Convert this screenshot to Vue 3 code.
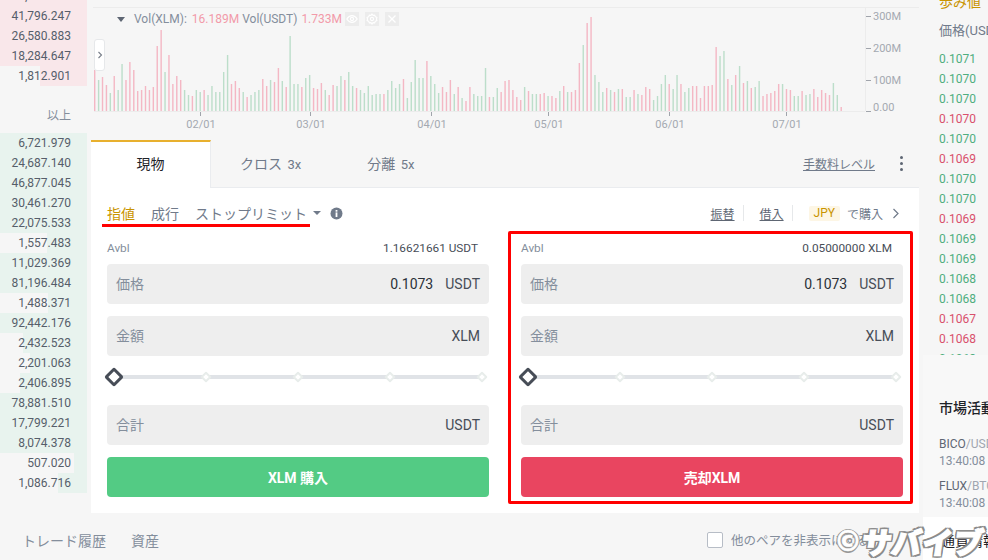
<script setup>
const asks = [
  { v: '9,204.318', w: 87 }, { v: '41,796.247', w: 87 }, { v: '26,580.883', w: 87 },
  { v: '18,284.647', w: 87 }, { v: '1,812.901', w: 47 }
]
const bids = [
  ['6,721.979', 87], ['24,687.140', 87], ['46,877.045', 87], ['30,461.270', 87], ['22,075.533', 87],
  ['1,557.483', 40], ['11,029.369', 87], ['81,196.484', 87], ['1,488.371', 39], ['92,442.176', 87],
  ['2,432.523', 64], ['2,201.063', 57], ['2,406.895', 67], ['78,881.510', 87], ['17,799.221', 87],
  ['8,074.378', 87], ['507.020', 13], ['1,086.716', 29]
]
// p = pink, g = green; heights measured from the reference
const raw = 'p41 g31 p34 p26 g18 p35 g21 g47 p31 p49 p41 p20 p21 p25 p21 p24 p65 p81 g39 p56 p27 p35 p31 g21 g16 p15 g21 g19 p21 g16 g25 g19 g19 g39 g56 p27 p30 p23 g19 p14 g16 g19 g21 p32 p25 g31 p29 p43 g30 p24 g75 g27 g27 p24 g33 g36 p23 p22 p28 g21 p16 p26 g25 g35 p31 g39 g25 p23 g21 g18 g25 g16 g17 g17 p17 g21 g30 g23 g27 p32 g13 g29 g51 g33 g33 p50 g35 g27 g18 p24 p19 p31 g17 p24 g13 p10 p24 g17 g15 g15 g43 p14 g14 g23 p19 p30 p31 p21 p14 p11 g24 p20 g17 g17 p17 p18 g15 p15 p13 g20 p25 g19 p19 p21 p48 g66 p88 p94 g36 g29 g19 p23 g21 p19 g22 p22 g14 g14 p21 g17 p16 p24 p22 g11 g15 g27 g36 p27 g22 g36 p27 g19 g23 p25 p25 p13 p25 p25 p26 p64 g55 g60 p32 g26 p36 g45 p28 g30 p23 g24 g30 p15 p17 p18 p20 p27 g27 p22 p21 g15 g15 p20 g16 g17 p22 p14 p21 p18 p16 g28 g16 p4'
const tokens = raw.split(' ')
const step = (841 - 94.5) / (tokens.length - 1)
const bars = tokens.map((t, i) => {
  const h = Number(t.slice(1))
  return { x: 94 + i * step, y: 111 - h, h, pink: t[0] === 'p' }
})
const xTicks = [
  { x: 200, t: '02/01' }, { x: 310, t: '03/01' }, { x: 431, t: '04/01' },
  { x: 548, t: '05/01' }, { x: 669, t: '06/01' }, { x: 786, t: '07/01' }
]
const yTicks = [
  { y: 16, t: '300M' }, { y: 48, t: '200M' }, { y: 80, t: '100M' }, { y: 111, t: '0.00', ty: 107 }
]
const forms = [
  { id: 'buy', avbl: '1.16621661 USDT', btn: 'XLM 購入' },
  { id: 'sell', avbl: '0.05000000 XLM', btn: '売却XLM' }
]
const trades = [
  ['0.1071', 'g'], ['0.1070', 'g'], ['0.1070', 'g'], ['0.1070', 'r'], ['0.1070', 'g'],
  ['0.1069', 'r'], ['0.1070', 'g'], ['0.1070', 'g'], ['0.1069', 'r'], ['0.1069', 'g'],
  ['0.1069', 'g'], ['0.1068', 'g'], ['0.1068', 'g'], ['0.1067', 'r'], ['0.1068', 'r'], ['0.1068', 'g']
]
</script>

<template>
  <div class="page">
    <div class="main">
      <div class="top">
        <aside class="book">
          <div v-for="r in asks" :key="r.v" class="row">
            <i class="depth ask" :style="{ width: r.w + 'px' }"></i>
            <span>{{ r.v }}</span>
          </div>
          <div class="limit">以上</div>
          <div v-for="r in bids" :key="r[0]" class="row">
            <i class="depth bid" :style="{ width: r[1] + 'px' }"></i>
            <span>{{ r[0] }}</span>
          </div>
        </aside>

        <section class="center">
          <div class="chart">
            <svg class="chart-svg" width="828" height="140" viewBox="91 0 828 140">
              <line x1="93" y1="7.5" x2="919" y2="7.5" stroke="#ececec" />
              <line x1="865.5" y1="7" x2="865.5" y2="111" stroke="#ececec" />
              <line x1="94" y1="111.5" x2="865" y2="111.5" stroke="#ececec" />
              <rect
                v-for="(b, i) in bars" :key="i" :x="b.x" :y="b.y" width="1.4" :height="b.h"
                :fill="b.pink ? '#f3849a' : '#8ccaa6'" fill-opacity="0.55"
              />
              <g v-for="t in xTicks" :key="t.t">
                <line :x1="t.x + 0.5" y1="112" :x2="t.x + 0.5" y2="116" stroke="#a0a4ab" />
                <text class="axis" :x="t.x + 1" y="128" text-anchor="middle">{{ t.t }}</text>
              </g>
              <g v-for="t in yTicks" :key="t.t">
                <line x1="866" :y1="t.y + 0.5" x2="871" :y2="t.y + 0.5" stroke="#a0a4ab" />
                <text class="axis" x="873" :y="(t.ty || t.y) + 4">{{ t.t }}</text>
              </g>
            </svg>
            <div class="legend">
              <i class="caret"></i>
              <span class="lg">Vol(XLM):</span>
              <span class="lp">16.189M</span>
              <span class="lg">Vol(USDT)</span>
              <span class="lp">1.733M</span>
              <span class="lbtns">
                <b class="lbtn">
                  <svg width="12" height="12" viewBox="0 0 12 12" fill="none" stroke="#fff" stroke-width="1.1"><path d="M.8 6C2.3 3.6 4 2.6 6 2.6S9.7 3.6 11.2 6C9.7 8.4 8 9.4 6 9.4S2.3 8.4.8 6z" /><circle cx="6" cy="6" r="1.6" /></svg>
                </b>
                <b class="lbtn">
                  <svg width="12" height="12" viewBox="0 0 12 12" fill="none" stroke="#fff" stroke-width="1.1"><path d="M6 1l1 1.4 1.7-.3.6 1.6 1.6.7-.4 1.6.4 1.6-1.6.7-.6 1.6L7 9.6 6 11 5 9.6l-1.7.3-.6-1.6L1.1 7.6 1.5 6l-.4-1.6 1.6-.7.6-1.6L5 2.4z" /><circle cx="6" cy="6" r="1.6" /></svg>
                </b>
                <b class="lbtn">
                  <svg width="12" height="12" viewBox="0 0 12 12" fill="none" stroke="#fff" stroke-width="1.3"><path d="M2.5 2.5l7 7M9.5 2.5l-7 7" /></svg>
                </b>
              </span>
            </div>
            <div class="toggle">
              <svg width="6" height="8" viewBox="0 0 6 8" fill="none" stroke="#777e88" stroke-width="1.1"><path d="M1.5 1l3 3-3 3" /></svg>
            </div>
          </div>

          <div class="tabs">
            <div class="tab active">現物</div>
            <div class="tab t2">クロス <small>3x</small></div>
            <div class="tab t3">分離 <small>5x</small></div>
            <a class="fee">手数料レベル</a>
            <span class="dots"><i></i><i></i><i></i></span>
          </div>

          <div class="panel">
            <div class="types">
              <span class="type on">指値</span>
              <span class="type">成行</span>
              <span class="type">ストップリミット</span>
              <i class="caret small"></i>
              <svg class="info" width="13" height="13" viewBox="0 0 13 13"><circle cx="6.5" cy="6.5" r="6" fill="#707a8a" /><rect x="5.6" y="5.4" width="1.8" height="4.6" fill="#fff" /><rect x="5.6" y="3" width="1.8" height="1.7" fill="#fff" /></svg>
              <span class="actions">
                <a class="ul">振替</a>
                <i class="sep"></i>
                <a class="ul">借入</a>
                <i class="sep"></i>
                <b class="jpy">JPY</b>
                <span class="buyin">で購入</span>
                <svg class="chev" width="8" height="11" viewBox="0 0 8 11" fill="none" stroke="#707a8a" stroke-width="1.2"><path d="M1.5 1l4.5 4.5L1.5 10" /></svg>
              </span>
            </div>

            <div class="forms">
              <form v-for="f in forms" :key="f.id" class="form" @submit.prevent>
                <div class="avbl"><span class="al">Avbl</span><span class="av">{{ f.avbl }}</span></div>
                <div class="field"><span class="fl">価格</span><span class="fv">0.1073</span><span class="fu">USDT</span></div>
                <div class="field"><span class="fl">金額</span><span class="fu">XLM</span></div>
                <div class="slider">
                  <i class="track"></i>
                  <i class="knob big"></i>
                  <i class="knob"></i><i class="knob"></i><i class="knob"></i><i class="knob"></i>
                </div>
                <div class="field"><span class="fl">合計</span><span class="fu">USDT</span></div>
                <button class="btn" :class="f.id">{{ f.btn }}</button>
              </form>
            </div>
          </div>
        </section>
      </div>

      <div class="bottom">
        <span class="bt">トレード履歴</span>
        <span class="bt">資産</span>
        <label class="hide"><i class="check"></i>他のペアを非表示にする</label>
      </div>
    </div>

    <aside class="side">
      <div class="side-top">
        <div class="walk">歩み値</div>
        <div class="ph">価格(USDT)</div>
        <div class="trades">
          <div v-for="(t, i) in trades" :key="i" class="trade" :class="t[1]">{{ t[0] }}</div>
        </div>
      </div>
      <div class="activity">
        <div class="h">市場活動</div>
        <div class="act"><div class="sym">BICO<em>/USDT</em></div><div class="tm">13:40:08</div></div>
        <div class="act"><div class="sym">FLUX<em>/BTC</em></div><div class="tm">13:40:08</div></div>
      </div>
      <div class="coin">通貨情報</div>
    </aside>

    <!-- annotations lying over the screenshot -->
    <div class="mark-line"></div>
    <div class="mark-box"></div>
    <div class="wm"><span class="wmc">©</span><span class="wmt">サバイブ</span></div>
  </div>
</template>

<style>
html, body { margin: 0; background: #f6f6f6; }
</style>

<style scoped>
* { box-sizing: border-box; }
.page {
  position: relative;
  width: 988px;
  height: 560px;
  overflow: hidden;
  display: flex;
  background: #f6f6f6;
  font-family: Roboto, "Noto Sans CJK JP", sans-serif;
  color: #474d57;
}
.main { width: 923px; display: flex; flex-direction: column; }
.top { height: 513px; display: flex; gap: 4px; overflow: hidden; }
.book { width: 87px; flex: none; margin-top: -14px; }
.row {
  position: relative;
  height: 20px;
  line-height: 20px;
  font-size: 12px;
  text-align: right;
  padding-right: 16px;
  color: #565e6a;
}
.row span { position: relative; }
.depth { position: absolute; right: 0; top: 0; bottom: 0; }
.ask { background: #f9e7ea; }
.bid { background: #e8f3ee; }
.limit {
  height: 47px;
  padding: 20px 16px 0 0;
  text-align: right;
  font-size: 12px;
  line-height: 20px;
  color: #848e9c;
}
.center { width: 828px; flex: none; display: flex; flex-direction: column; }
.chart { position: relative; height: 140px; }
.chart-svg { display: block; }
.axis { font: 11px Roboto, sans-serif; fill: #a4a9b1; }
.legend {
  position: absolute;
  left: 26px;
  top: 12px;
  display: flex;
  align-items: center;
  height: 14px;
  font-size: 12px;
}
.caret {
  width: 0; height: 0;
  border: 4px solid transparent;
  border-top: 5px solid #5e6673;
  border-bottom: 0;
  margin-right: 9px;
}
.lg { color: #848e9c; margin-right: 5px; }
.lg + .lp + .lg { margin-right: 4px; }
.lp { color: #f29aa9; margin-right: 3px; }
.lbtns { display: flex; gap: 6px; }
.lbtn {
  width: 14px; height: 14px;
  background: #ececec;
  display: flex; align-items: center; justify-content: center;
}
.toggle {
  position: absolute;
  left: 3px;
  top: 39px;
  width: 11px;
  height: 32px;
  background: #fff;
  border: 1px solid #e6e8ea;
  border-radius: 3px;
  display: flex; align-items: center; justify-content: center;
}
.tabs {
  height: 48px;
  display: flex;
  align-items: center;
  border-bottom: 1px solid #eaecef;
  position: relative;
}
.tab { font-size: 14px; color: #707a8a; height: 48px; line-height: 48px; }
.tab small { font-size: 13px; margin-left: 2px; }
.tab.active {
  width: 120px;
  text-align: center;
  background: #fff;
  color: #1e2329;
  border-top: 2px solid #e8b02e;
  border-right: 1px solid #eaecef;
  line-height: 44px;
  margin-bottom: -1px;
}
.t2 { margin-left: 29px; }
.t3 { margin-left: 66px; }
.fee {
  margin-left: auto;
  font-size: 12px;
  color: #707a8a;
  text-decoration: underline;
}
.dots {
  display: flex; flex-direction: column; gap: 3px;
  margin: 0 16px 0 25px;
}
.dots i { width: 3px; height: 3px; border-radius: 50%; background: #5e6673; }
.panel { flex: 1; background: #fff; padding: 0 16px; }
.types {
  height: 52px;
  padding-bottom: 2px;
  display: flex;
  align-items: center;
  font-size: 14px;
}
.type { color: #707a8a; margin-right: 16px; }
.type.on { color: #c99400; }
.caret.small { margin: 0 9px 0 -10px; border-width: 4px; border-top-width: 4px; border-bottom-width: 0; border-top-color: #707a8a; }
.info { margin-left: 0; }
.actions { margin-left: auto; margin-right: 3px; display: flex; align-items: center; font-size: 12px; color: #707a8a; }
.ul { text-decoration: underline; color: #5e6673; }
.sep { width: 1px; height: 16px; background: #e6e8ea; margin: 0 16px 0 8px; }
.jpy {
  font-weight: 400;
  font-size: 12px;
  background: #fdf6e5;
  color: #c99400;
  padding: 0 5px;
  border-radius: 2px;
  height: 15px; line-height: 15px;
  margin-right: 7px;
}
.chev { margin-left: 9px; }
.forms { display: flex; gap: 32px; }
.form { width: 382px; display: flex; flex-direction: column; }
.avbl {
  height: 24px;
  padding: 0 11px 8px 0;
  display: flex;
  justify-content: space-between;
  align-items: center;
  font-size: 11.8px;
}
.al { color: #848e9c; }
.av { color: #474d57; }
.field {
  height: 40px;
  background: #eeeeee;
  border-radius: 4px;
  padding: 0 9px;
  display: flex;
  align-items: center;
  font-size: 14px;
}
.field + .field { margin-top: 12px; }
.fl { color: #848e9c; margin-right: auto; padding-bottom: 2px; }
.fv { color: #2b3139; margin-right: 12px; }
.fu { color: #474d57; }
.slider {
  position: relative;
  height: 49px;
  padding-bottom: 7px;
  display: flex;
  justify-content: space-between;
  align-items: center;
}
.track {
  position: absolute;
  left: 14px; right: 7px; top: 19px;
  height: 4px;
  background: #e0e3e7;
}
.knob {
  position: relative;
  width: 8px; height: 8px;
  margin: 0 3px;
  transform: rotate(45deg);
  background: #fff;
  border: 2px solid #e8edeb;
  border-radius: 1px;
}
.knob.big {
  width: 14px; height: 14px;
  margin: 0;
  border: 3px solid #474d57;
  border-radius: 2px;
}
.btn {
  height: 40px;
  margin-top: 12px;
  border: 0;
  border-radius: 4px;
  color: #fff;
  font: 700 14px Roboto, "Noto Sans CJK JP", sans-serif;
}
.btn.buy { background: #53cb84; }
.btn.sell { background: #e94560; }
.bottom {
  flex: 1;
  display: flex;
  align-items: center;
  padding: 6px 0 0 22px;
  font-size: 14px;
  color: #848e9c;
}
.bt { margin-right: 25px; }
.hide { margin-left: 523px; display: flex; align-items: center; font-size: 12.5px; white-space: nowrap; gap: 8px; }
.check { width: 16px; height: 16px; border: 1px solid #b7bdc6; border-radius: 2px; background: #fff; flex: none; }
.side { flex: 1; min-width: 0; display: flex; flex-direction: column; overflow: hidden; white-space: nowrap; }
.side-top { height: 355px; padding-left: 16px; overflow: hidden; }
.walk { font-size: 14px; line-height: 20px; margin-top: -8px; color: #c99400; }
.ph { font-size: 13px; line-height: 20px; margin-top: 9px; color: #707a8a; }
.trades { margin-top: 8px; }
.trade { font-size: 12px; line-height: 20px; height: 20px; }
.trade.g { color: #4fae7e; }
.trade.r { color: #d9506c; }
.activity { height: 162px; padding: 43px 0 0 16px; background: #f8f8f8; }
.h { font-size: 14px; font-weight: 500; color: #1e2329; line-height: 20px; margin-bottom: 18px; }
.act { margin-bottom: 8px; font-size: 12px; line-height: 17px; }
.sym { color: #5e6673; }
.sym em { font-style: normal; color: #a0a6b0; }
.tm { color: #848e9c; }
.coin { flex: 1; background: #fff; padding: 13px 0 0 18px; font-size: 14px; color: #1e2329; }
.mark-line { position: absolute; left: 102px; top: 223.5px; width: 208px; height: 3px; background: #f00; }
.mark-box {
  position: absolute;
  left: 508px; top: 231px;
  width: 405px; height: 273px;
  border: 3px solid #f00;
  border-radius: 2px;
}
.wm {
  position: absolute;
  left: 834px;
  top: 519px;
  display: flex;
  align-items: center;
  font-family: "Noto Sans CJK JP", sans-serif;
  font-weight: 900;
  color: #fff;
  white-space: nowrap;
}
.wmc {
  font-size: 28px;
  font-family: "DejaVu Sans", sans-serif;
  font-weight: 700;
  -webkit-text-stroke: .6px #fff;
  text-shadow: 1.5px 0 #999, -1.5px 0 #999, 0 1.5px #999, 0 -1.5px #999;
}
.wmt {
  font-size: 30px;
  letter-spacing: 1px;
  transform: skewX(-8deg);
  -webkit-text-stroke: 1.2px #fff;
  text-shadow: 2px 0 #8c8c8c, -2px 0 #8c8c8c, 0 2px #8c8c8c, 0 -2px #8c8c8c, 2px 2px #8c8c8c, -2px 2px #8c8c8c, 2px -2px #8c8c8c, -2px -2px #8c8c8c;
}
</style>
